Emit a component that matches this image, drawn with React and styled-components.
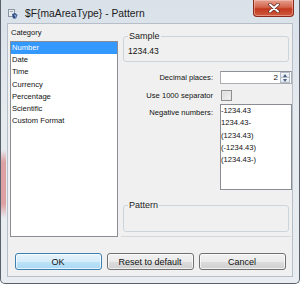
import React from "react";
import styled, { createGlobalStyle } from "styled-components";

const GlobalStyle = createGlobalStyle`
  html, body {
    margin: 0;
    padding: 0;
    background: #ffffff;
    overflow: hidden;
  }
  body {
    font-family: "Liberation Sans", Arial, sans-serif;
    color: #000000;
  }
  * {
    box-sizing: border-box;
  }
`;

const Window = styled.div`
  width: 300px;
  height: 284px;
  display: flex;
  flex-direction: column;
  padding: 0 6px 6px 6px;
  border: 1px solid #58616b;
  border-top: none;
  border-radius: 0 0 5px 5px;
  background:
    linear-gradient(
        to bottom,
        rgba(214, 96, 96, 0) 150px,
        rgba(214, 100, 100, 0.55) 162px,
        rgba(214, 100, 100, 0.55) 204px,
        rgba(214, 96, 96, 0) 218px
      )
      left top / 5px 100% no-repeat,
    linear-gradient(to bottom, #d9e1e9, #e5eaef 40%, #e9edf1);
`;

const TitleBar = styled.div`
  height: 23px;
  flex: none;
  display: flex;
  align-items: flex-start;
  margin-right: -1px;
`;

const TitleIcon = styled.svg`
  width: 10px;
  height: 10px;
  margin: 9px 0 0 1px;
  flex: none;
`;

const TitleText = styled.span`
  flex: 1;
  margin: 8px 0 0 7px;
  font-size: 10.3px;
  line-height: 12px;
  color: #1b1b1b;
  white-space: nowrap;
`;

const CloseButton = styled.div`
  width: 41px;
  height: 17px;
  flex: none;
  display: flex;
  align-items: center;
  justify-content: center;
  border: 1px solid #8b2a1c;
  border-top: none;
  border-radius: 0 0 4px 4px;
  background: linear-gradient(to bottom, #e3a08f, #d4634b 45%, #c2391f 55%, #cf5a3c);
  box-shadow: inset 0 0 0 1px rgba(255, 210, 200, 0.45);
`;

const Client = styled.div`
  flex: 1;
  display: flex;
  flex-direction: column;
  background: #f0f0f0;
  border: 1px solid #b6bfc8;
  padding: 4px 1px 6px 1px;
`;

const Body = styled.div`
  display: flex;
  gap: 5px;
  padding: 0 1px;
`;

const LeftColumn = styled.div`
  width: 108px;
  flex: none;
  display: flex;
  flex-direction: column;
`;

const SmallLabel = styled.div`
  font-size: 7.5px;
  line-height: 10px;
  height: 10px;
  padding-left: 1px;
  margin-bottom: 3px;
  color: #111111;
`;

const ListBox = styled.div`
  height: ${(p) => p.$height}px;
  width: ${(p) => (p.$width ? `${p.$width}px` : "auto")};
  background: #ffffff;
  border: 1px solid #8a8d93;
  overflow: hidden;
`;

const ListItem = styled.div`
  font-size: 7.6px;
  line-height: ${(p) => p.$lh}px;
  height: ${(p) => p.$lh}px;
  padding-left: ${(p) => p.$indent}px;
  white-space: nowrap;
  color: ${(p) => (p.$selected ? "#ffffff" : "#111111")};
  background: ${(p) => (p.$selected ? "#3399ff" : "transparent")};
`;

const RightColumn = styled.div`
  flex: 1;
  display: flex;
  flex-direction: column;
  padding-top: 3px;
`;

const Group = styled.fieldset`
  margin: ${(p) => p.$top}px 3px 0 0;
  padding: 0 4px;
  height: ${(p) => p.$height}px;
  min-width: 0;
  border: 1px solid #cdd5dc;
  border-radius: 3px;
`;

const Legend = styled.legend`
  font-size: 9px;
  line-height: 10px;
  padding: 0 1px;
  color: #1e1e1e;
`;

const SampleValue = styled.div`
  margin-top: 5px;
  font-size: 8.5px;
  line-height: 10px;
  color: #111111;
`;

const FormRow = styled.div`
  display: flex;
  align-items: ${(p) => p.$align || "center"};
  margin-top: ${(p) => p.$top}px;
  min-height: 13px;
`;

const FieldLabel = styled.div`
  width: 90px;
  flex: none;
  margin-right: 7px;
  padding-top: ${(p) => p.$pad || 0}px;
  text-align: right;
  font-size: 7.6px;
  line-height: 10px;
  color: #111111;
  white-space: nowrap;
`;

const Spinner = styled.div`
  width: 72px;
  height: 13px;
  display: flex;
  align-items: stretch;
  background: #ffffff;
  border: 1px solid #abadb3;
  border-top-color: #8e929a;
`;

const SpinValue = styled.div`
  flex: 1;
  text-align: right;
  font-size: 8px;
  line-height: 11px;
  padding-right: 2px;
  color: #111111;
`;

const SpinButtons = styled.div`
  width: 10px;
  margin-right: 1px;
  display: flex;
  flex-direction: column;
`;

const SpinHalf = styled.div`
  flex: 1;
  display: flex;
  align-items: center;
  justify-content: center;
  border: 1px solid #b5bcc6;
  border-top-width: ${(p) => (p.$down ? 0 : 1)}px;
  background: linear-gradient(to bottom, #f4f7fb, #dfe6ee);
`;

const Arrow = styled.div`
  width: 0;
  height: 0;
  border-left: 2.5px solid transparent;
  border-right: 2.5px solid transparent;
  ${(p) =>
    p.$down
      ? "border-top: 3px solid #4b5f80;"
      : "border-bottom: 3px solid #4b5f80;"}
`;

const CheckBox = styled.div`
  width: 11px;
  height: 11px;
  margin-left: 1px;
  border: 1px solid #8f8f8f;
  background: linear-gradient(135deg, #d8d8d8, #f4f4f4);
  box-shadow: inset 0 0 0 1px #e6e6e6;
`;

const Separator = styled.div`
  height: 1px;
  margin: 4px 1px 0 -2px;
  background: #d4d8dc;
`;

const ButtonRow = styled.div`
  display: flex;
  justify-content: center;
  gap: 5px;
  margin-top: 16px;
`;

const Button = styled.div`
  width: 87px;
  height: 17px;
  display: flex;
  align-items: center;
  justify-content: center;
  font-size: 9px;
  color: #111111;
  border-radius: 3px;
  border: 1px solid ${(p) => (p.$primary ? "#3c7fb1" : "#707070")};
  background: ${(p) =>
    p.$primary
      ? "linear-gradient(to bottom, #e6f3fb 0%, #d5ecfa 50%, #bde3f8 51%, #a9d8f3 100%)"
      : "linear-gradient(to bottom, #f2f2f2 0%, #ebebeb 50%, #dddddd 51%, #cfcfcf 100%)"};
  box-shadow: inset 0 0 0 1px rgba(255, 255, 255, 0.7);
`;

const categories = [
  "Number",
  "Date",
  "Time",
  "Currency",
  "Percentage",
  "Scientific",
  "Custom Format",
];

const negatives = ["-1234.43", "1234.43-", "(1234.43)", "(-1234.43)", "(1234.43-)"];

const App = () => {
  return (
    <>
      <GlobalStyle />
      <Window>
        <TitleBar>
          <TitleIcon viewBox="0 0 10 10">
            <rect x="0.5" y="0.5" width="6" height="7" fill="#e8ecf1" stroke="#8a94a3" strokeWidth="1" />
            <rect x="2" y="2" width="3" height="1" fill="#9aa4b2" />
            <path d="M4 5 L7 4 L9.5 6 L8 9.5 L5 9.5 Z" fill="#2d4f86" />
            <path d="M6 6 L8 6.5 L7.5 8.5" fill="none" stroke="#b7c7dd" strokeWidth="0.8" />
          </TitleIcon>
          <TitleText>$F&#123;maAreaType&#125; - Pattern</TitleText>
          <CloseButton>
            <svg width="12" height="10" viewBox="0 0 12 10">
              <path d="M2 1.5 L10 8.5 M10 1.5 L2 8.5" stroke="#5a2a22" strokeWidth="3.4" strokeLinecap="round" />
              <path d="M2 1.5 L10 8.5 M10 1.5 L2 8.5" stroke="#ffffff" strokeWidth="2" strokeLinecap="round" />
            </svg>
          </CloseButton>
        </TitleBar>

        <Client>
          <Body>
            <LeftColumn>
              <SmallLabel>Category</SmallLabel>
              <ListBox $height={196}>
                {categories.map((name, i) => (
                  <ListItem key={name} $lh={12.2} $indent={1} $selected={i === 0}>
                    {name}
                  </ListItem>
                ))}
              </ListBox>
            </LeftColumn>

            <RightColumn>
              <Group $top={0} $height={31}>
                <Legend>Sample</Legend>
                <SampleValue>1234.43</SampleValue>
              </Group>

              <FormRow $top={9}>
                <FieldLabel>Decimal places:</FieldLabel>
                <Spinner>
                  <SpinValue>2</SpinValue>
                  <SpinButtons>
                    <SpinHalf>
                      <Arrow />
                    </SpinHalf>
                    <SpinHalf $down>
                      <Arrow $down />
                    </SpinHalf>
                  </SpinButtons>
                </Spinner>
              </FormRow>

              <FormRow $top={5}>
                <FieldLabel>Use 1000 separator</FieldLabel>
                <CheckBox />
              </FormRow>

              <FormRow $top={2} $align="flex-start">
                <FieldLabel $pad={4}>Negative numbers:</FieldLabel>
                <ListBox $height={86} $width={72}>
                  {negatives.map((v) => (
                    <ListItem key={v} $lh={12.25} $indent={0}>
                      {v}
                    </ListItem>
                  ))}
                </ListBox>
              </FormRow>

              <Group $top={10} $height={32}>
                <Legend>Pattern</Legend>
              </Group>
              <Separator />
            </RightColumn>
          </Body>

          <ButtonRow>
            <Button $primary>OK</Button>
            <Button>Reset to default</Button>
            <Button>Cancel</Button>
          </ButtonRow>
        </Client>
      </Window>
    </>
  );
};

export default App;
